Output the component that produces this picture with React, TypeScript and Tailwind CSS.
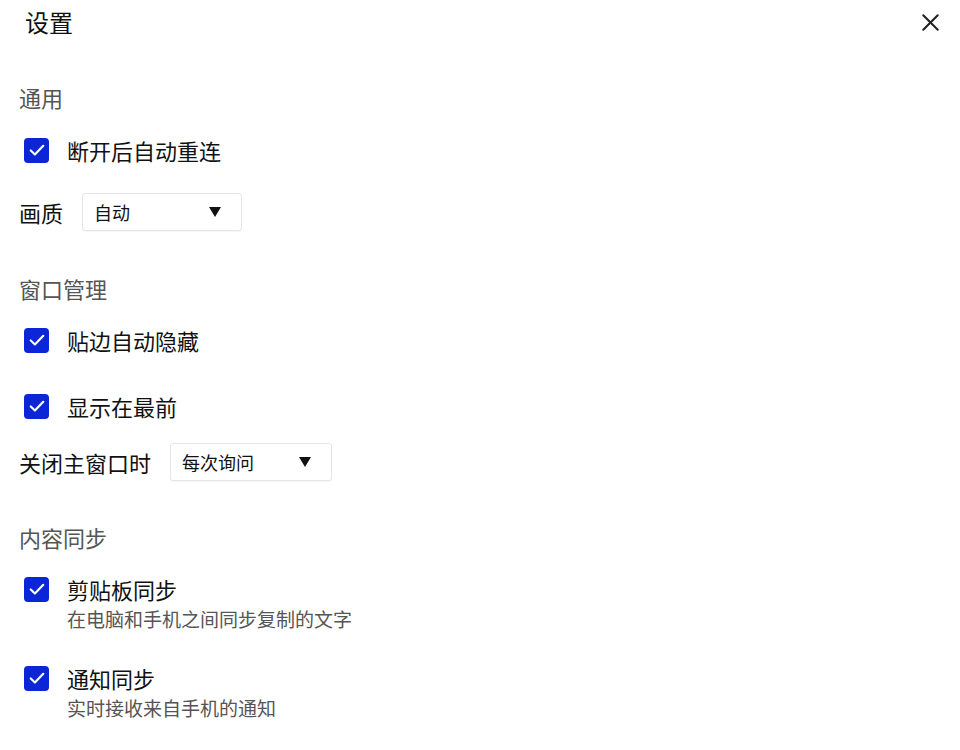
import { X } from 'lucide-react'

const font = { fontFamily: '"Noto Sans CJK SC", "Noto Sans", sans-serif' }

function Checkbox() {
  return (
    <span className="flex h-[25px] w-[25px] shrink-0 items-center justify-center rounded-[4px] bg-[#0a26d6]">
      <svg width="20" height="20" viewBox="0 0 24 24" fill="none">
        <path d="M4.5 12.5l5 4.8 10-10.3" stroke="white" strokeWidth="2.6" strokeLinecap="round" strokeLinejoin="round" />
      </svg>
    </span>
  )
}

function CheckRow({ label, desc, className }: { label: string; desc?: string; className?: string }) {
  return (
    <div className={className}>
      <div className="flex h-[36px] items-center pl-[24px]">
        <Checkbox />
        <span className="ml-[18px] text-[22px] leading-[36px] text-[#111111]">{label}</span>
      </div>
      {desc && (
        <div className="h-[24px] pl-[67px] text-[19px] leading-[24px] text-[#555555]">{desc}</div>
      )}
    </div>
  )
}

function Select({ value, width }: { value: string; width: string }) {
  return (
    <div
      className={`flex h-[38px] ${width} items-center justify-between rounded-[3px] border border-[#e6e6e6] bg-white pl-[11px] pr-[20px] shadow-[0_1px_1px_rgba(0,0,0,0.04)]`}
    >
      <span className="text-[18px] text-[#111111]">{value}</span>
      <svg width="12" height="10" viewBox="0 0 12 10">
        <path d="M0 0h12L6 10z" fill="#111" />
      </svg>
    </div>
  )
}

function Section({ title, className }: { title: string; className?: string }) {
  return (
    <div className={`h-[32px] pl-[19px] text-[22px] leading-[32px] text-[#555555] ${className ?? ''}`}>
      {title}
    </div>
  )
}

export default function App() {
  return (
    <div className="h-[750px] w-[960px] overflow-hidden bg-white" style={font}>
      {/* 标题栏 */}
      <div className="flex h-[44px] items-center justify-between pl-[25px] pr-[15px]">
        <span className="text-[24px] leading-[44px] text-[#111111]">设置</span>
        <X size={29} strokeWidth={1.7} color="#222" />
      </div>

      {/* 通用 */}
      <Section title="通用" className="mt-[37px]" />
      <CheckRow label="断开后自动重连" className="mt-[19px]" />
      <div className="mt-[24px] flex h-[40px] items-center pl-[19px]">
        <span className="mr-[19px] text-[22px] text-[#111111]">画质</span>
        <Select value="自动" width="w-[160px]" />
      </div>

      {/* 窗口管理 */}
      <Section title="窗口管理" className="mt-[40px]" />
      <CheckRow label="贴边自动隐藏" className="mt-[18px]" />
      <CheckRow label="显示在最前" className="mt-[30px]" />
      <div className="mt-[18px] flex h-[40px] items-center pl-[19px]">
        <span className="mr-[19px] text-[22px] text-[#111111]">关闭主窗口时</span>
        <Select value="每次询问" width="w-[162px]" />
      </div>

      {/* 内容同步 */}
      <Section title="内容同步" className="mt-[39px]" />
      <CheckRow label="剪贴板同步" desc="在电脑和手机之间同步复制的文字" className="mt-[18px]" />
      <CheckRow label="通知同步" desc="实时接收来自手机的通知" className="mt-[29px]" />
    </div>
  )
}
